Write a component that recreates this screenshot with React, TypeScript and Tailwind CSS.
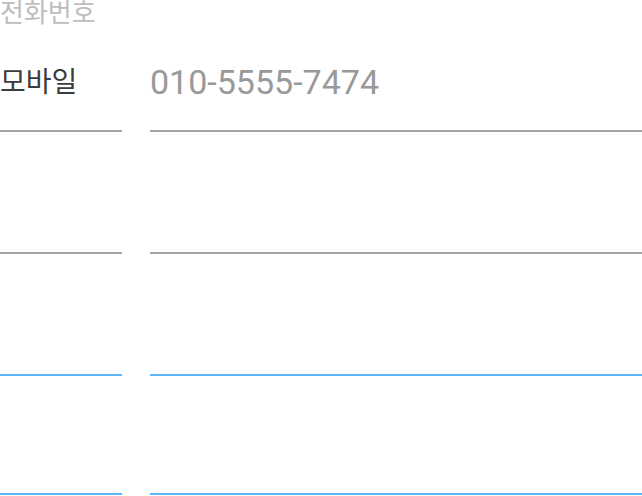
import React from "react";

const rows = [
  { label: "모바일", value: "010-5555-7474", height: "h-[106px]", line: "border-[#a3a3a3]" },
  { label: "", value: "", height: "h-[122px]", line: "border-[#a3a3a3]" },
  { label: "", value: "", height: "h-[122px]", line: "border-[#5ab4f5]" },
  { label: "", value: "", height: "h-[119px]", line: "border-[#5ab4f5]" },
];

export default function App(): React.ReactElement {
  return (
    <div className="w-[642px] h-[496px] overflow-hidden bg-white font-['Roboto','Noto_Sans_CJK_KR',sans-serif]">
      <div className="h-[26px] text-[26px] leading-[26px] text-[#bdbdbd]">전화번호</div>

      {rows.map((row, i) => (
        <div key={i} className={`grid grid-cols-[122px_1fr] gap-x-[28px] ${row.height}`}>
          <div className={`flex flex-col border-b-2 ${row.line}`}>
            <span className="pt-[37px] text-[28px] leading-[40px] text-[#3c3c3c]">{row.label}</span>
          </div>
          <div className={`flex flex-col border-b-2 ${row.line}`}>
            <span className="pt-[36px] text-[34px] leading-[40px] text-[#999999]">{row.value}</span>
          </div>
        </div>
      ))}
    </div>
  );
}
